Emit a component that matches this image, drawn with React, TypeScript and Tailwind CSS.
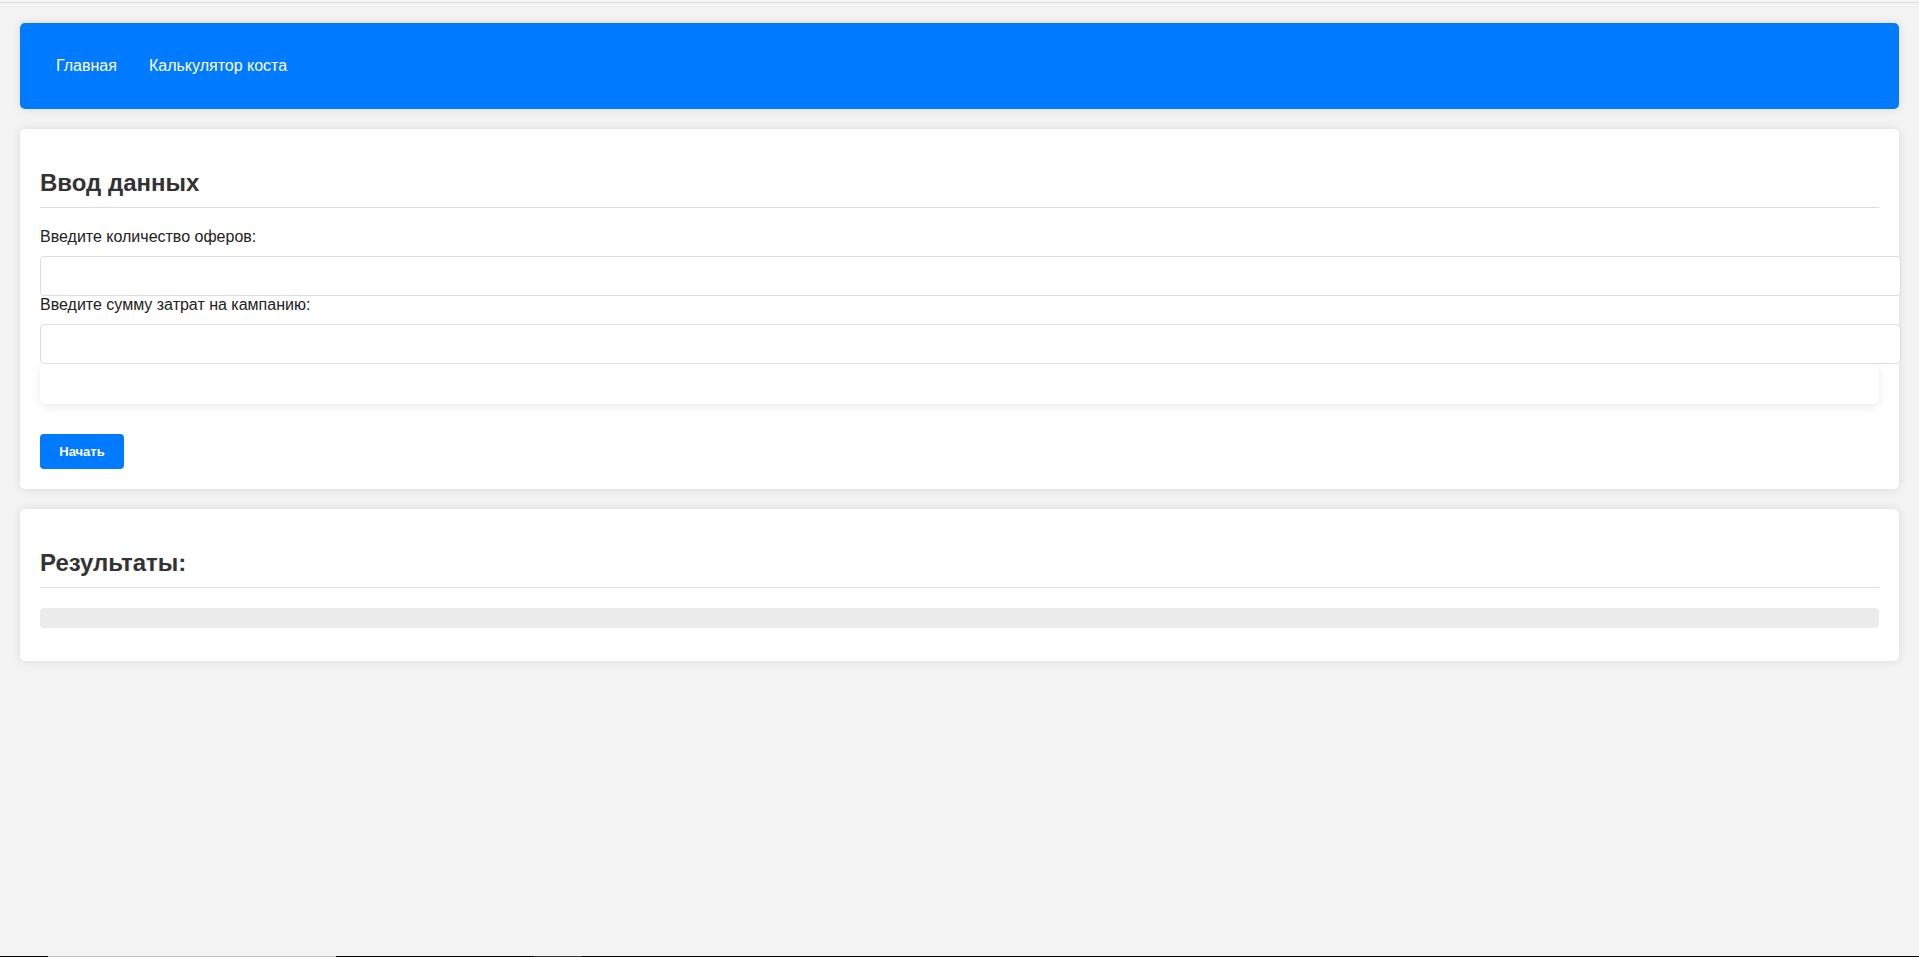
import React from "react";

export default function App() {
  return (
    <div
      className="relative min-h-[957px] bg-[#f3f3f3] text-[#222] overflow-hidden"
      style={{ fontFamily: '"Liberation Sans", Arial, sans-serif' }}
    >
      <div className="h-[2px] bg-[#f5f5f5]" />
      <div className="h-px bg-[#dddddd]" />
      <div className="px-5 pt-5">
        <nav className="h-[86px] bg-[#007bff] rounded-[5px] shadow-[0_0_10px_rgba(0,0,0,0.1)] flex items-center px-5">
          <a className="px-4 text-white text-base leading-[18px]">Главная</a>
          <a className="px-4 text-white text-base leading-[18px]">Калькулятор коста</a>
        </nav>

        <section className="mt-5 bg-white rounded-[5px] shadow-[0_0_10px_rgba(0,0,0,0.1)] p-5">
          <h2 className="my-5 text-[24px] leading-[27.6px] font-bold text-[#333] pb-[10px] border-b border-[#dddddd]">
            Ввод данных
          </h2>
          <div className="relative">
            <label className="block text-base leading-[18.4px] mb-[10px] text-[#222]">
              Введите количество оферов:
            </label>
            <input
              type="number"
              className="relative z-10 block box-content w-full h-[18px] px-[10px] py-[10px] border border-[#dddddd] rounded-[4px] bg-white outline-none"
            />
            <label className="block text-base leading-[18.4px] mb-[10px] text-[#222]">
              Введите сумму затрат на кампанию:
            </label>
            <input
              type="number"
              className="relative z-10 block box-content w-full h-[18px] px-[10px] py-[10px] border border-[#dddddd] rounded-[4px] bg-white outline-none"
            />
            <div className="h-[40px] bg-white rounded-[6px] shadow-[0_3px_10px_rgba(0,0,0,0.08)]" />
          </div>
          <button className="mt-[30px] h-[35px] w-[84px] flex items-center justify-center bg-[#007bff] text-white text-[13px] font-bold rounded-[4px]">
            Начать
          </button>
        </section>

        <section className="mt-5 bg-white rounded-[5px] shadow-[0_0_10px_rgba(0,0,0,0.1)] p-5">
          <h2 className="my-5 text-[24px] leading-[27.6px] font-bold text-[#333] pb-[10px] border-b border-[#dddddd]">
            Результаты:
          </h2>
          <div className="h-5 bg-[#ececec] rounded-[4px] mb-[13px]" />
        </section>
      </div>

      <div className="absolute left-0 right-0 bottom-0 h-px flex">
        <div className="w-[48px] bg-black" />
        <div className="w-[288px] bg-[#c0c0c0]" />
        <div className="w-[198px] bg-black" />
        <div className="w-[48px] bg-[#333333]" />
        <div className="flex-1 bg-black" />
      </div>
    </div>
  );
}
